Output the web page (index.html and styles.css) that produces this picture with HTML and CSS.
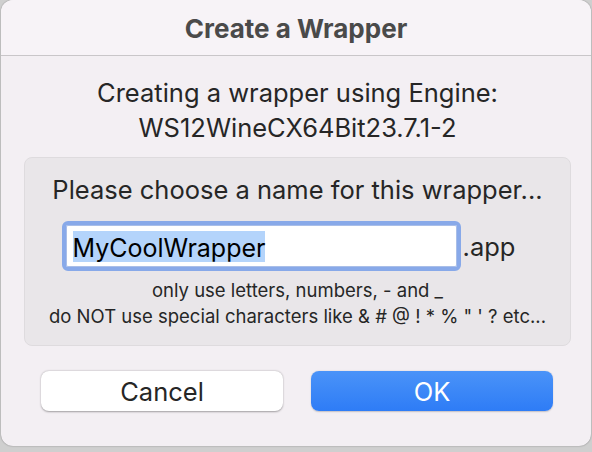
FILE: index.html
```html
<!DOCTYPE html>
<html>
<head>
<meta charset="utf-8">
<link rel="stylesheet" href="styles.css">
</head>
<body>
<div class="window">
  <div class="titlebar">Create a Wrapper</div>
  <div class="content">
    <div class="intro">
      <div>Creating a wrapper using Engine:</div>
      <div>WS12WineCX64Bit23.7.1-2</div>
    </div>
    <div class="panel">
      <div class="prompt">Please choose a name for this wrapper...</div>
      <div class="field-row">
        <div class="field"><span class="sel">MyCoolWrapper</span></div>
        <span class="ext">.app</span>
      </div>
      <div class="hint first">only use letters, numbers, - and _</div>
      <div class="hint">do NOT use special characters like &amp; # @ ! * % " ' ? etc...</div>
    </div>
    <div class="buttons">
      <div class="btn cancel">Cancel</div>
      <div class="btn ok">OK</div>
    </div>
  </div>
</div>
</body>
</html>
```
FILE: styles.css
```css
html, body {
  margin: 0;
  padding: 0;
}
body {
  width: 592px;
  height: 452px;
  background: #cfcfcf;
  font-family: Inter, "Noto Sans", sans-serif;
  color: #262626;
  overflow: hidden;
}
.window {
  margin: 0 1px;
  height: 446px;
  background: #f3eff3;
  border-radius: 12px;
  box-shadow: 0 0 1.5px rgba(0,0,0,0.45);
  overflow: hidden;
  display: flex;
  flex-direction: column;
}
.titlebar {
  flex: none;
  height: 56px;
  box-sizing: border-box;
  padding-top: 1px;
  background: #f7f3f7;
  border-bottom: 1px solid #c9c6c9;
  display: flex;
  align-items: center;
  justify-content: center;
  font-weight: 700;
  font-size: 26px;
  color: #4a4a4a;
}
.content {
  display: flex;
  flex-direction: column;
  padding: 0 20px 0 23px;
}
.intro {
  text-align: center;
  font-size: 25.5px;
  line-height: 35px;
  padding-top: 19px;
}
.panel {
  margin-top: 12px;
  background: #e9e6e9;
  border: 1px solid #dedbde;
  border-radius: 8px;
  height: 189px;
  display: flex;
  flex-direction: column;
  align-items: center;
  padding-top: 16px;
  box-sizing: border-box;
}
.prompt {
  font-size: 25.5px;
  line-height: 32px;
}
.field-row {
  display: flex;
  align-items: center;
  margin-top: 15px;
  margin-left: -18px;
}
.field {
  width: 399px;
  height: 50px;
  box-sizing: border-box;
  background: #fff;
  border: 4px solid #88a9e9;
  box-shadow: inset 0 0 0 1px #a9bee8;
  border-radius: 6px;
  padding: 6px 0 0 7px;
  font-size: 25px;
  color: #000;
}
.sel {
  display: inline-block;
  background: #b4d4fb;
  height: 31px;
  line-height: 34px;
}
.ext {
  font-size: 25.5px;
  margin-left: 2px;
  margin-top: 1px;
}
.hint {
  font-size: 18.5px;
  line-height: 26px;
}
.hint.first {
  margin-top: 6px;
}
.buttons {
  display: flex;
  gap: 28px;
  padding: 25px 18px 0 17px;
}
.btn {
  flex: 1;
  height: 40px;
  border-radius: 8px;
  display: flex;
  align-items: center;
  justify-content: center;
  font-size: 25.5px;
}
.cancel {
  background: #fff;
  box-shadow: 0 0.5px 2px rgba(0,0,0,0.35);
  color: #262626;
}
.ok {
  background: linear-gradient(#4a93f8, #2e7cf6);
  color: #fff;
  box-shadow: 0 0.5px 1.5px rgba(0,0,0,0.2);
}
```
